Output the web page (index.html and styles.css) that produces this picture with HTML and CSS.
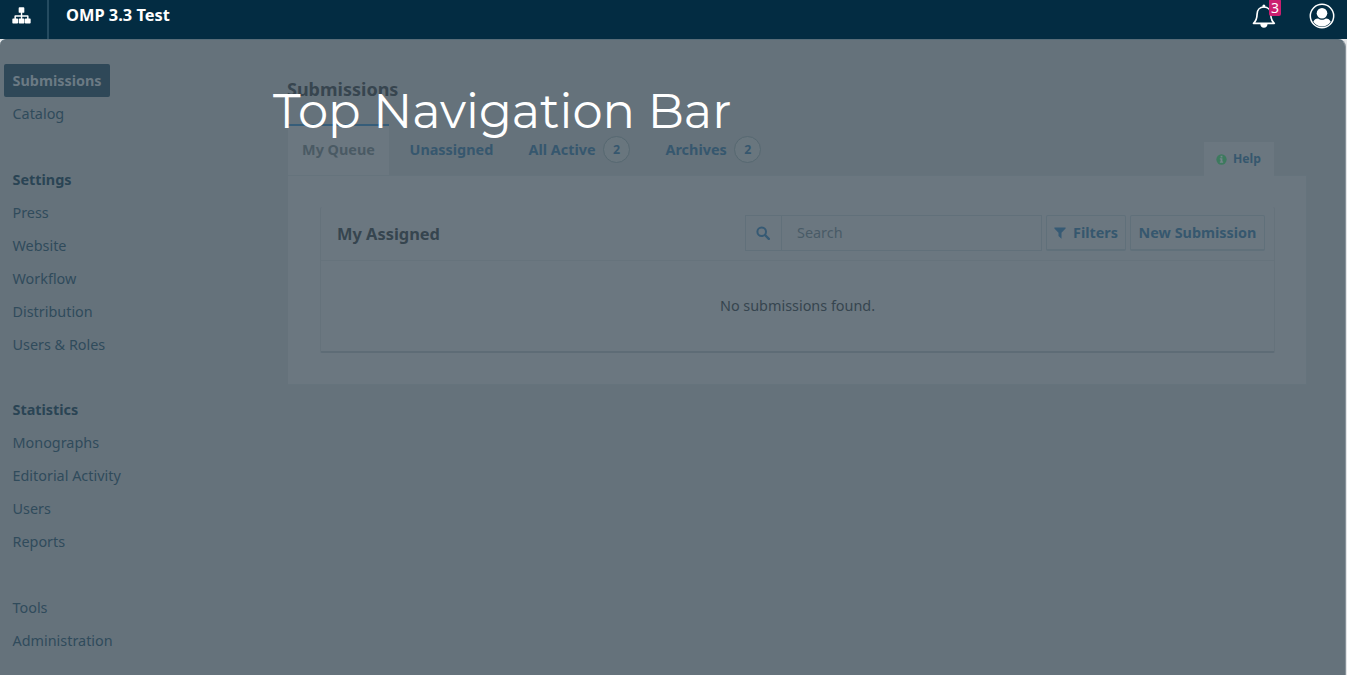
FILE: index.html
```html
<!DOCTYPE html>
<html lang="en">
<head>
<meta charset="utf-8">
<title>OMP 3.3 Test</title>
<link rel="stylesheet" href="styles.css">
</head>
<body>
<header class="topbar">
  <div class="contexts">
    <svg class="sitemap" viewBox="0 0 20 18"><path fill="#fff" d="M7 1.2q0-.9.9-.9h4.2q.9 0 .9.9v4q0 .9-.9.9h-1.3v2.6h5.7q1 0 1 1v2.6H19q.7 0 .7.8v3.5q0 .8-.8.8h-4.5q-.8 0-.8-.8v-3.5q0-.8.8-.8h1.5v-2h-5.1v2h1.500q.8 0 .8.8v3.500q0 .8-.8.8H7.800q-.8 0-.8-.8v-3.500q0-.8.8-.8h1.500v-2H4.100v2h1.400q.8 0 .8.8v3.500q0 .8-.8.8H1.100q-.8 0-.8-.8v-3.500q0-.8.8-.8h1.400V9.700q0-1 1-1h5.800V6.100H7.900Q7 6.100 7 5.200z"/></svg>
  </div>
  <div class="brand">OMP 3.3 Test</div>
  <div class="actions">
    <div class="bell">
      <svg viewBox="0 0 24 26"><path d="M1.500 20.300C4.200 18 5 15.500 5.100 11c.1-4 2.700-7 6.800-7s6.700 3 6.800 7c.1 4.500.9 7 3.600 9.300z" fill="none" stroke="#fff" stroke-width="1.700" stroke-linejoin="round"/><circle cx="11.900" cy="2.900" r="1.500" fill="#fff"/><path d="M8.300 21h7.200c0 2.200-1.500 3.700-3.600 3.700S8.300 23.200 8.300 21z" fill="#fff"/></svg>
      <span class="alert">3</span>
    </div>
    <svg class="user" viewBox="0 0 26 26"><circle cx="13" cy="13" r="11.700" fill="none" stroke="#fff" stroke-width="1.500"/><circle cx="13" cy="10.200" r="5.300" fill="#fff"/><path d="M4.300 18.800c.8-2.300 2.600-3.400 4.800-3.400 2.300 1.900 5.500 1.900 7.800 0 2.200 0 4 1.100 4.800 3.400A10.500 10.500 0 0 1 4.300 18.800z" fill="#fff"/></svg>
  </div>
</header>
<div class="stage">
<div class="app">
  <nav class="side">
    <a class="item current">Submissions</a>
    <a class="item">Catalog</a>
    <div class="group">
      <a class="item heading">Settings</a>
      <a class="item">Press</a>
      <a class="item">Website</a>
      <a class="item">Workflow</a>
      <a class="item">Distribution</a>
      <a class="item">Users &amp; Roles</a>
    </div>
    <div class="group">
      <a class="item heading">Statistics</a>
      <a class="item">Monographs</a>
      <a class="item">Editorial Activity</a>
      <a class="item">Users</a>
      <a class="item">Reports</a>
    </div>
    <div class="group">
      <a class="item">Tools</a>
      <a class="item">Administration</a>
    </div>
  </nav>
  <main class="page">
    <h1 class="title">Submissions</h1>
    <div class="tabs">
      <a class="tab active">My Queue</a>
      <a class="tab unassigned">Unassigned</a>
      <a class="tab all">All Active<span class="count">2</span></a>
      <a class="tab archives">Archives<span class="count">2</span></a>
      <a class="help"><svg viewBox="0 0 12 12"><circle cx="6" cy="6" r="5.600" fill="#3d7a5e"/><path fill="#74858a" d="M5 2h2v1.700H5zM4.200 4.700H7v3.600h.8v1.200H4.200V8.300H5V5.900h-.8z"/></svg>Help</a>
    </div>
    <section class="panel">
      <div class="list">
        <div class="list-head">
          <h2 class="list-title">My Assigned</h2>
          <div class="search"><span class="glass"><svg viewBox="0 0 14 14"><circle cx="5.700" cy="5.700" r="4.300" fill="none" stroke="#365a74" stroke-width="2"/><path d="M9 9l3.800 3.800" stroke="#365a74" stroke-width="2.400" stroke-linecap="round"/></svg></span><span class="placeholder">Search</span></div>
          <a class="button filters"><svg viewBox="0 0 12 12"><path fill="#365a74" d="M.4.400h11.200v1L7.500 5.800v5.900L4.500 9V5.800L.4 1.400z"/></svg>Filters</a>
          <a class="button submit">New Submission</a>
        </div>
        <div class="empty">No submissions found.</div>
      </div>
    </section>
  </main>
  <div class="caption">Top Navigation Bar</div>
</div>
</div>
</body>
</html>
```
FILE: styles.css
```css
* { box-sizing: border-box; }
body { margin: 0; width: 1347px; height: 675px; overflow: hidden; font: 14.400px/20px "Noto Sans", sans-serif; color: #2f4858; background: #e3e5e7; }
h1, h2 { margin: 0; }
svg { display: block; flex: none; }
.topbar { display: flex; height: 39px; background: #032c42; color: #fff; }
.contexts { width: 49px; border-right: 2px solid #244b60; padding: 7px 0 0 12px; }
.sitemap { width: 19px; height: 17px; }
.brand { padding: 5px 0 0 17px; font-size: 16.400px; font-weight: 700; }
.actions { display: flex; margin-left: auto; padding: 3px 12px 0 0; gap: 33px; }
.bell { position: relative; width: 25px; }
.bell svg { width: 24px; height: 26px; margin-left: 1px; }
.alert { position: absolute; left: 18px; top: -4px; width: 12px; height: 17px; background: #cb1f70; border-radius: 2px; font-size: 14px; line-height: 18px; text-align: center; }
.user { width: 26px; height: 26px; }
.stage { height: 636px; }
.app { position: relative; display: flex; width: 1346px; height: 636px; background: #65727b; border-radius: 6px 8px 0 0; border-top: 1px solid #576c78; border-right: 1px solid #87929a; }
.side { width: 287px; padding: 24px 0 0 4px; }
.item { display: block; height: 32.940px; line-height: 33px; padding-left: 8.500px; color: #304b5b; }
.current { width: 106px; background: #2f4858; color: #6b7a84; font-weight: 700; border-radius: 2px; }
.heading { font-weight: 700; color: #2a4454; }
.group { margin-top: 32.940px; }
.page { width: 1020px; padding-top: 37px; }
.title { font-size: 18px; line-height: 24px; color: #37454f; }
.tabs { display: flex; height: 51px; margin-top: 23px; font-weight: 700; color: #36576e; }
.tab { height: 51px; padding: 2px 0; display: flex; align-items: center; white-space: nowrap; }
.active { width: 101px; margin-left: 1px; justify-content: center; color: #4a5a64; background: #6b7780; border-top: 2px solid #365d79; padding: 0 0 2px; }
.unassigned { margin-left: 20.500px; width: 119px; }
.all { width: 137px; }
.archives { width: 100px; }
.count { display: block; flex: none; width: 27px; height: 27px; margin-left: 7.500px; border: 1px solid #566871; border-radius: 50%; background: #69767e; font-size: 12.400px; line-height: 25px; text-align: center; }
.help { display: flex; align-items: center; margin: 18px 33px 0 auto; width: 70px; height: 34px; background: #6b7780; padding-left: 12px; gap: 6px; font-size: 12.200px; position: relative; }
.help svg { width: 11px; height: 11px; }
.panel { margin-left: 1px; width: 1019px; height: 210px; background: #6b7780; border: 1px solid #65737c; border-left: 0; padding: 31px 31px 0 32px; }
.list { width: 955px; height: 146px; border: 1px solid #65727b; border-top: 0; border-bottom: 2px solid #5e6c76; border-radius: 2px; }
.list-head { display: flex; height: 54px; align-items: flex-start; border-bottom: 1px solid #66737c; padding: 8px 9px 0 16px; }
.list-title { font-size: 16.400px; line-height: 37px; color: #36454f; }
.search { display: flex; width: 297px; height: 36px; border: 1px solid #61707a; margin-left: auto; line-height: 33px; color: #495b67; }
.glass { width: 36px; border-right: 1px solid #61707a; padding: 10px 0 0 10px; }
.glass svg { width: 14px; height: 14px; }
.placeholder { padding-left: 15px; }
.button { display: flex; align-items: center; height: 36px; border: 1px solid #60707a; border-bottom-width: 2px; border-radius: 2px; font-weight: 700; color: #36576e; white-space: nowrap; padding-top: 1px; }
.filters { width: 80px; margin-left: 4px; padding-left: 7px; gap: 7px; }
.filters svg { width: 12px; height: 12px; }
.submit { width: 135px; margin-left: 4px; justify-content: center; }
.empty { padding-top: 35px; text-align: center; color: #36454f; }
.caption { position: absolute; left: 273px; top: 41px; font: 400 48px/60px Montserrat, Inter, sans-serif; color: #fff; white-space: nowrap; }
```
